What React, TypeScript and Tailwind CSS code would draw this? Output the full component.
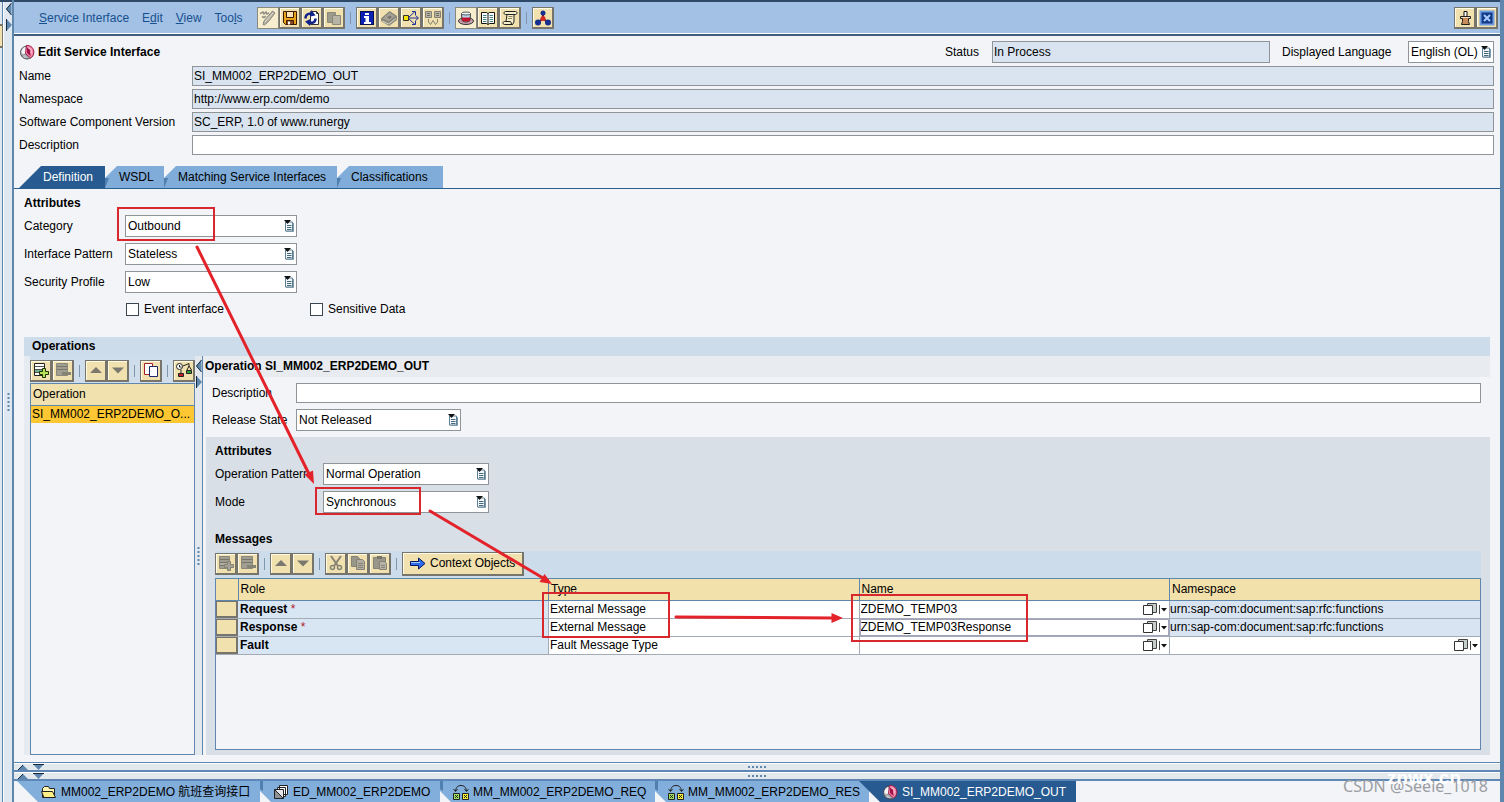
import type { ReactNode } from "react";
import clsx from "clsx";

/* ---------- icons ---------- */

interface IconProps {
  children: ReactNode;
  w?: number;
  h?: number;
}

const Icon = ({ children, w = 16, h = 16 }: IconProps) => (
  <svg
    width={w}
    height={h}
    viewBox={`0 0 ${w} ${h}`}
    fill="none"
    aria-hidden="true"
    className="shrink-0"
  >
    {children}
  </svg>
);

const ServiceIcon = () => (
  <Icon>
    <circle cx="8" cy="8.5" r="6.5" fill="#bdbdc4" stroke="#4a4a52" />
    <path d="M2.5 8a6 6 0 0 1 3.500-5l1.500 6-3 2z" fill="#f4f4f6" />
    <path d="M7.5 1.5C12 1 15 4.500 14.800 8.500c0 2.500-1.500 4.500-3.300 5.500L6.500 9.500z" fill="#f58aa8" stroke="#9c1c48" />
    <path d="M8 3.500v5.500l3.500 3V6z" fill="#a3124a" />
    <path d="M9.500 4l2.500 1.500v4" stroke="#ffd3df" />
    <path d="M3 11.500l3-1.500 4 4.500" stroke="#8b8b93" />
  </Icon>
);

const PencilIcon = () => (
  <Icon>
    <path d="M0 3.500l3-1.500 1 2 2-2 1 2 2-1M2 6.500l2 1 2-1.500" stroke="#8f8c80" strokeWidth="1.5" />
    <path d="M15 3L8.500 11.500l-4 3.500L3 14.500 4 11l8.500-10z" fill="#b5b1a4" stroke="#8a877b" />
    <path d="M5 12l8-9" stroke="#e2decf" />
  </Icon>
);

const SaveIcon = () => (
  <Icon>
    <path d="M1.500 1.500h13v13h-11l-2-2z" fill="#e8a21c" stroke="#3a1a00" />
    <path d="M4.500 1.500h7v6h-7z" fill="#fbe3b8" stroke="#3a1a00" />
    <path d="M4.500 10.500h7v4h-7z" fill="#8c4a2c" stroke="#3a1a00" />
    <path d="M6 11.500h2v3H6z" fill="#fff" />
  </Icon>
);

const RefreshDocIcon = () => (
  <Icon>
    <path d="M6.500 1.500h6l2 2v11h-8z" fill="#fff" stroke="#333" />
    <path d="M12.500 1.500v2h2" stroke="#333" />
    <path d="M1.500 8.500C1.500 4 5 3 8 4.500" stroke="#10248c" strokeWidth="2.5" />
    <path d="M7.500 0l4 5.500-5.500 1z" fill="#10248c" />
    <path d="M11.500 8.500c0 4-3.500 5-6 3.500" stroke="#10248c" strokeWidth="2.5" />
    <path d="M6.500 9L1 11.500 6 16z" fill="#10248c" />
  </Icon>
);

const CopyGrayIcon = () => (
  <Icon>
    <path d="M1.500 2.500h8v10h-8z" fill="#9d9a8e" stroke="#8a877b" />
    <path d="M6.500 5.500h8v9h-8z" fill="#b8b4a5" stroke="#8a877b" />
  </Icon>
);

const InfoIcon = () => (
  <Icon>
    <path d="M1 1h14v14H1z" fill="#0b22b4" />
    <path d="M1.500 1.500h13v13h-13z" stroke="#04104f" />
    <path d="M6 3h4v2H6zM5 6h5v6h2v2H5v-2h1.500V8H5z" fill="#fff" />
  </Icon>
);

const BookGrayIcon = () => (
  <Icon>
    <path d="M0 8.500L8.500 1 16 6v4L8 16 0 11z" fill="#8f8c80" />
    <path d="M1 8.500L8.500 2 15 6 7.500 12z" fill="#a5a295" stroke="#838074" />
    <path d="M1.500 11l6 3L15 8.500" stroke="#d6d2c2" />
    <path d="M6 7.500l2.500-2 2.500 1.500L8.500 9z" fill="#77746a" />
  </Icon>
);

const WhereUsedIcon = () => (
  <Icon>
    <path d="M.5 5.500h5v5h-5z" fill="#f6e200" stroke="#333" />
    <path d="M6 8h9M6 7l6-5.500M6 9l6 5.500" stroke="#1e2f9a" />
    <path d="M12.500 5.500l3 2.500-3 2.500M9 1.500h3.500V5M9 14.500h3.500V11" stroke="#1e2f9a" />
  </Icon>
);

const CompareGrayIcon = () => (
  <Icon>
    <path d="M.5 1.500h6v6h-6zM9.500 1.500h6v6h-6z" fill="#b8b4a5" stroke="#838074" />
    <path d="M2 3.500h3M2 5.500h3M11 3.500h3M11 5.500h3" stroke="#6f6c61" />
    <path d="M3.500 9v3l2 2.500 2.500-4 2.500 4 2-2.500V9" stroke="#838074" />
  </Icon>
);

const HatIcon = () => (
  <Icon>
    <ellipse cx="8" cy="11" rx="7.5" ry="3.5" fill="#c9a0ac" stroke="#333" />
    <path d="M3.500 3.500l.5 7c2 2 6 2 8 0l.5-7z" fill="#b9d8ee" stroke="#333" />
    <path d="M4 7.500h8v3c-2 1.500-6 1.500-8 0z" fill="#c3122e" />
    <ellipse cx="8" cy="3.500" rx="4.500" ry="1.500" fill="#eef7fc" stroke="#555" />
  </Icon>
);

const OpenBookIcon = () => (
  <Icon>
    <path d="M1.500 2.500h5l1.500 1 1.500-1h5v11h-5l-1.500 1-1.500-1h-5z" fill="#fff" stroke="#111" />
    <path d="M8 3.500v11" stroke="#111" />
    <path d="M3 5.500h3.500M3 7.500h3.500M3 9.500h3.500M3 11.500h3.500M9.500 5.500H13M9.500 7.500H13M9.500 9.500H13M9.500 11.500H13" stroke="#3f7f86" />
  </Icon>
);

const ScrollIcon = () => (
  <Icon>
    <path d="M3.500 1.500h10c2 0 2 3 0 3H12V12l-1.500 2.500h-8c-2 0-2-3 0-3H4l1-7H3.500c-2 0-2-3 0-3z" fill="#f6eec8" stroke="#222" />
    <path d="M12 4.500H5M10.500 14.500c-2 0-1-3-2-3H4" stroke="#222" />
    <path d="M6.500 6.500h4M6 8.500h4" stroke="#8c8660" />
  </Icon>
);

const MoleculeIcon = () => (
  <Icon>
    <path d="M8 3v5.500M8 8.500l-5 4M8 8.500l5 4" stroke="#7a1420" strokeWidth="2" />
    <circle cx="8" cy="3" r="2.5" fill="#16308f" />
    <circle cx="8" cy="8.5" r="2.5" fill="#d42a24" />
    <circle cx="3" cy="12.5" r="3" fill="#16308f" />
    <circle cx="13" cy="12.5" r="3" fill="#16308f" />
  </Icon>
);

const PinIcon = () => (
  <Icon>
    <path d="M7 6V1.500h3V6" fill="#fff" stroke="#111" />
    <path d="M3.500 6.500h10v2h-2v3l1 3h-8l1-3v-3h-2z" fill="#c98b5a" stroke="#222" />
    <path d="M4 7.500h9" stroke="#f5dcb4" />
  </Icon>
);

const CloseIcon = () => (
  <Icon>
    <path d="M1.500 1.500h13v13h-13z" fill="#123a86" stroke="#6f9be0" strokeWidth="2" />
    <path d="M5 5l6 6M11 5l-6 6" stroke="#a9cbff" strokeWidth="2" />
  </Icon>
);

const InsertRowIcon = ({ muted = false }: { muted?: boolean }) => (
  <Icon>
    <path d="M1.500 1.500h10v12h-10z" fill={muted ? "#a09d91" : "#fff"} stroke={muted ? "#8a877b" : "#222"} />
    <path d="M2 4.500h9M2 7.500h9M2 10.500h9" stroke={muted ? "#77746a" : "#555"} />
    <path d="M2 8h9v2H2z" fill={muted ? "#b1ada0" : "#6fae8c"} />
    <path d="M9.500 6.500h3v3h3v3h-3v3h-3v-3h-3v-3h3z" fill={muted ? "#a5a295" : "#b4e05a"} stroke={muted ? "#838074" : "#1c3300"} />
  </Icon>
);

const DeleteRowIcon = () => (
  <Icon>
    <path d="M1.500 1.500h11v12h-11z" fill="#a09d91" stroke="#8a877b" />
    <path d="M2 4.500h10M2 7.500h10" stroke="#77746a" />
    <path d="M7 10h9v3H7z" fill="#858276" />
  </Icon>
);

const UpIcon = () => (
  <Icon>
    <path d="M2 11l6-6 6 6z" fill="#7b796f" />
  </Icon>
);

const DownIcon = () => (
  <Icon>
    <path d="M2 5.500h12l-6 6z" fill="#7b796f" />
  </Icon>
);

const CopyIcon = () => (
  <Icon>
    <path d="M1.500 1.500h8v11h-8z" fill="#fff" stroke="#a3202c" />
    <path d="M6.500 4.500h8v10h-8z" fill="#fff" stroke="#1c2a6c" />
  </Icon>
);

const BalanceIcon = () => (
  <Icon>
    <circle cx="3.5" cy="4.5" r="3" fill="#fff" stroke="#222" />
    <path d="M3.500 3v2h2M7 4l6-2.500v3M13 4l-2 4M13 4l2.500 4M5 8v3" stroke="#222" />
    <path d="M2.500 11.500h5v3h-5z" fill="#c3202c" stroke="#222" />
    <path d="M10.500 8.500h5v3h-5z" fill="#2f9e3a" stroke="#222" />
  </Icon>
);

const CutIcon = () => (
  <Icon>
    <path d="M3 1l7 10M13 1L6 11" stroke="#858276" strokeWidth="2" />
    <circle cx="4.5" cy="12.5" r="2" stroke="#858276" strokeWidth="1.5" />
    <circle cx="11.5" cy="12.5" r="2" stroke="#858276" strokeWidth="1.5" />
  </Icon>
);

const PagesGrayIcon = () => (
  <Icon>
    <path d="M1.500 1.500h6l2 2v8h-8z" fill="#99968a" stroke="#858276" />
    <path d="M6.500 4.500h6l2 2v8h-8z" fill="#b1ada0" stroke="#858276" />
    <path d="M8 8.500h5M8 10.500h5M8 12.500h5" stroke="#858276" />
  </Icon>
);

const PasteGrayIcon = () => (
  <Icon>
    <path d="M1.500 2.500h12v11h-12z" fill="#99968a" stroke="#858276" />
    <path d="M5 1h5v3H5z" fill="#77746a" />
    <path d="M7.500 6.500h5l2 2v6h-7z" fill="#b8b4a5" stroke="#858276" />
    <path d="M9 10.500h4M9 12.500h4" stroke="#858276" />
  </Icon>
);

const ArrowIcon = () => (
  <Icon>
    <path d="M.5 6.500h8V3l6.500 5.500L8.500 14v-3.500h-8z" fill="#2f6df0" stroke="#08145c" />
    <path d="M1 7.500h9" stroke="#9cc6ff" />
  </Icon>
);

const FolderIcon = () => (
  <Icon>
    <path d="M1.500 13.500v-9l2-2h4l1 2h5v9z" fill="#fff7b0" stroke="#222" />
    <path d="M3 13.500L.5 7.500h11l3 6z" fill="#ffef84" stroke="#222" />
  </Icon>
);

const StackIcon = () => (
  <Icon>
    <path d="M6.500 1.500h8v9h-8zM4.500 3.500h8v9h-8z" fill="#fff" stroke="#222" />
    <path d="M1.500 5.500h9v9h-9z" fill="#e6e6ea" stroke="#222" />
    <path d="M2 6l8 8H2z" fill="#8f8f96" />
    <path d="M1.500 5.500l9 9" stroke="#222" />
  </Icon>
);

const MappingIcon = () => (
  <Icon>
    <path d="M2.500 7C3 3 5 1.500 8 1.500S13 3 13.500 7M.5 5l2 2.500 2-2.500M11.500 5l2 2.500 2-2.500" stroke="#222" />
    <path d="M.5 9.500h6v6h-6z" fill="#9fe060" stroke="#222" />
    <path d="M9.500 9.500h6v6h-6z" fill="#f6ee3c" stroke="#222" />
    <path d="M2 11l3 3M5 11l-3 3M11 11l3 3M14 11l-3 3" stroke="#222" />
  </Icon>
);

const ListIcon = () => (
  <Icon w={11} h={12}>
    <path d="M1.500 2h7v9h-7z" fill="#f4f8fa" stroke="#5c7f93" />
    <path d="M9.500 3v8.500H2" stroke="#7d9baa" />
    <path d="M3 5.500h4.500M3 7.500h4.500M3 9.500h4.500" stroke="#45687c" />
    <path d="M0 0h7L3.500 4z" fill="#111" />
  </Icon>
);

const BrowseIcon = () => (
  <Icon w={24} h={14}>
    <path d="M4.500 1.500h9v9h-9z" fill="#c5cdc8" stroke="#444" />
    <path d="M.5 3.500h9v9h-9z" fill="#fff" stroke="#333" />
    <path d="M16.500 3v9" stroke="#444" />
    <path d="M18 6h6l-3 3.500z" fill="#111" />
  </Icon>
);

const CollapseArrows = () => (
  <Icon w={6} h={30}>
    <path d="M5.500 1v12L0 7z" fill="#5f87ae" />
    <path d="M5.500 1L.5 7l5 6" stroke="#16293d" />
    <path d="M.5 17v12L6 23z" fill="#5f87ae" />
    <path d="M.5 17v12" stroke="#16293d" />
  </Icon>
);

const BarArrows = () => (
  <Icon w={26} h={6}>
    <path d="M0 6l5-5 5 5z" fill="#5f87ae" />
    <path d="M0 6l5-5" stroke="#16293d" />
    <path d="M15 0h11l-5.500 6z" fill="#5f87ae" />
    <path d="M15 .5h11" stroke="#16293d" />
  </Icon>
);

const VerticalDots = () => (
  <Icon w={3} h={18}>
    <path d="M1.500 0v18" stroke="#5f87ae" strokeWidth="2" strokeDasharray="2 2" />
  </Icon>
);

/* ---------- controls ---------- */

interface ToolButtonProps {
  label: string;
  children: ReactNode;
  pressed?: boolean;
}

const ToolButton = ({ label, children, pressed }: ToolButtonProps) => (
  <button
    type="button"
    aria-label={label}
    className={clsx(
      "flex h-[22px] w-[22px] shrink-0 items-center justify-center border",
      pressed
        ? "border-[#8b897d] bg-[#f7eed0]"
        : "border-b-2 border-r-2 border-[#77756b] bg-[#f0e1ae] shadow-[inset_1px_1px_0_#fffbe8]"
    )}
  >
    {children}
  </button>
);

const Separator = () => <span className="mx-[5px] h-3 w-px shrink-0 bg-[#7f97ae]" />;

interface SelectFieldProps {
  id: string;
  value: string;
  className: string;
}

const SelectField = ({ id, value, className }: SelectFieldProps) => (
  <span className={clsx("relative flex", className)}>
    <select
      id={id}
      defaultValue={value}
      className="h-[22px] w-full appearance-none border border-[#8f9499] bg-white pl-[2px] text-black outline-none"
    >
      <option>{value}</option>
    </select>
    <span className="pointer-events-none absolute right-[2px] top-[5px]">
      <ListIcon />
    </span>
  </span>
);

interface TextRowProps {
  id: string;
  label: string;
  value?: string;
}

const TextRow = ({ id, label, value }: TextRowProps) => (
  <div className="flex items-center">
    <label htmlFor={id} className="w-[173px] shrink-0">
      {label}
    </label>
    <input
      id={id}
      type="text"
      defaultValue={value}
      readOnly={value !== undefined}
      className={clsx(
        "h-5 min-w-0 flex-1 border border-[#8f9499] px-[1px] outline-none",
        value !== undefined ? "bg-[#d9e4f0]" : "bg-white"
      )}
    />
  </div>
);

const attributeFields = [
  { id: "category", label: "Category", value: "Outbound" },
  { id: "pattern", label: "Interface Pattern", value: "Stateless" },
  { id: "security", label: "Security Profile", value: "Low" },
];

const operationFields = [
  { id: "op-pattern", label: "Operation Pattern", value: "Normal Operation" },
  { id: "op-mode", label: "Mode", value: "Synchronous" },
];

const tabs = [
  { label: "WSDL", width: "w-[59px]" },
  { label: "Matching Service Interfaces", width: "w-[173px]" },
  { label: "Classifications", width: "w-[106px]" },
];

const messages = [
  { role: "Request", required: true, type: "External Message", name: "ZDEMO_TEMP03", ns: "urn:sap-com:document:sap:rfc:functions" },
  { role: "Response", required: true, active: true, type: "External Message", name: "ZDEMO_TEMP03Response", ns: "urn:sap-com:document:sap:rfc:functions" },
  { role: "Fault", required: false, type: "Fault Message Type", name: "", ns: "" },
];

const windowTabs = [
  { label: "ED_MM002_ERP2DEMO", icon: <StackIcon />, width: "w-[180px]" },
  { label: "MM_MM002_ERP2DEMO_REQ", icon: <MappingIcon />, width: "w-[215px]" },
  { label: "MM_MM002_ERP2DEMO_RES", icon: <MappingIcon />, width: "w-[214px]" },
];

/* ---------- sections ---------- */

const MenuBar = () => (
  <header className="flex h-[36px] shrink-0 items-center border-b-2 border-t-2 border-b-[#3f5f7c] border-t-[#2f4a68] bg-[#a3c1e4] pl-[25px] pr-[2px] shadow-[inset_0_-1px_0_#fff]">
    <nav className="flex w-[218px] shrink-0 gap-[13px] text-[#17508f]">
      <button type="button"><u>S</u>ervice Interface</button>
      <button type="button">E<u>d</u>it</button>
      <button type="button"><u>V</u>iew</button>
      <button type="button">Too<u>l</u>s</button>
    </nav>
    <ToolButton label="Display/Change" pressed><PencilIcon /></ToolButton>
    <ToolButton label="Save"><SaveIcon /></ToolButton>
    <ToolButton label="Refresh"><RefreshDocIcon /></ToolButton>
    <ToolButton label="Copy"><CopyGrayIcon /></ToolButton>
    <Separator />
    <ToolButton label="Info"><InfoIcon /></ToolButton>
    <ToolButton label="Documentation"><BookGrayIcon /></ToolButton>
    <ToolButton label="Where used"><WhereUsedIcon /></ToolButton>
    <ToolButton label="Compare"><CompareGrayIcon /></ToolButton>
    <Separator />
    <ToolButton label="Header" pressed><HatIcon /></ToolButton>
    <ToolButton label="Help"><OpenBookIcon /></ToolButton>
    <ToolButton label="History"><ScrollIcon /></ToolButton>
    <Separator />
    <ToolButton label="Relations"><MoleculeIcon /></ToolButton>
    <span className="flex-1" />
    <ToolButton label="Pin"><PinIcon /></ToolButton>
    <ToolButton label="Close"><CloseIcon /></ToolButton>
  </header>
);

const InterfaceHeader = () => (
  <section className="flex flex-col gap-[3px] pl-[5px] pr-[6px] pt-[5px]">
    <div className="flex items-center gap-3">
      <h1 className="flex flex-1 items-center gap-[3px] font-bold">
        <ServiceIcon />
        Edit Service Interface
      </h1>
      <label htmlFor="status" className="w-[35px]">Status</label>
      <input
        id="status"
        readOnly
        defaultValue="In Process"
        className="h-[22px] w-[278px] border border-[#8f9499] bg-[#d9e4f0] px-[1px] outline-none"
      />
      <label htmlFor="language" className="w-[114px]">Displayed Language</label>
      <SelectField id="language" value="English (OL)" className="w-[86px]" />
    </div>
    <TextRow id="name" label="Name" value="SI_MM002_ERP2DEMO_OUT" />
    <TextRow id="namespace" label="Namespace" value="http://www.erp.com/demo" />
    <TextRow id="version" label="Software Component Version" value="SC_ERP, 1.0 of www.runergy" />
    <TextRow id="description" label="Description" />
  </section>
);

const TabStrip = () => (
  <div role="tablist" className="mt-[11px] flex border-b border-[#2b5f92] pl-[5px]">
    <button
      type="button"
      role="tab"
      aria-selected="true"
      className="h-[22px] w-[86px] bg-[#265a90] pl-6 text-left text-white [clip-path:polygon(22px_0,100%_0,100%_100%,0_100%)]"
    >
      Definition
    </button>
    {tabs.map((tab) => (
      <button
        key={tab.label}
        type="button"
        role="tab"
        aria-selected="false"
        className={clsx(
          "relative h-[22px] whitespace-nowrap bg-[#7facd9] pl-[14px] text-left [clip-path:polygon(12px_0,100%_0,100%_100%,0_100%,0_12px)]",
          tab.width
        )}
      >
        <span className="absolute bottom-0 left-0 h-[10px] w-1 bg-[#4f7fae] [clip-path:polygon(0_0,100%_0,0_100%)]" />
        {tab.label}
      </button>
    ))}
  </div>
);

const Attributes = () => (
  <section className="pt-[6px]">
    <h2 className="font-bold">Attributes</h2>
    <div className="mt-1 flex flex-col gap-[6px]">
      {attributeFields.map((field) => (
        <div key={field.id} className="flex items-center">
          <label htmlFor={field.id} className="w-[101px] shrink-0">
            {field.label}
          </label>
          <SelectField id={field.id} value={field.value} className="w-[172px]" />
        </div>
      ))}
    </div>
    <div className="mt-2 flex pl-[102px]">
      <label className="flex w-[184px] items-center gap-[5px]">
        <input type="checkbox" className="h-[13px] w-[13px] appearance-none border border-[#3c4650] bg-white" />
        Event interface
      </label>
      <label className="flex items-center gap-[5px]">
        <input type="checkbox" className="h-[13px] w-[13px] appearance-none border border-[#3c4650] bg-white" />
        Sensitive Data
      </label>
    </div>
  </section>
);

const OperationList = () => (
  <aside className="flex w-[171px] shrink-0 flex-col bg-[#e6ebf1] pl-[6px]">
    <div className="flex h-[27px] items-center bg-[#d0deec] pt-[2px]">
      <ToolButton label="Add operation"><InsertRowIcon /></ToolButton>
      <ToolButton label="Remove operation"><DeleteRowIcon /></ToolButton>
      <Separator />
      <ToolButton label="Move up"><UpIcon /></ToolButton>
      <ToolButton label="Move down"><DownIcon /></ToolButton>
      <Separator />
      <ToolButton label="Duplicate"><CopyIcon /></ToolButton>
      <Separator />
      <ToolButton label="Check"><BalanceIcon /></ToolButton>
    </div>
    <div className="flex-1 border border-[#5f87ae] bg-[#f2f4f8]">
      <table className="w-full border-collapse text-left">
        <thead>
          <tr className="h-[21px] border-b border-[#5f87ae] bg-[#f0e1ae]">
            <th className="p-0 pl-[2px] font-normal">Operation</th>
          </tr>
        </thead>
        <tbody>
          <tr className="h-[18px] bg-[#fdc733]">
            <td className="whitespace-nowrap p-0 pl-px">SI_MM002_ERP2DEMO_O...</td>
          </tr>
        </tbody>
      </table>
    </div>
  </aside>
);

const MessagesTable = () => (
  <div className="flex-1 border border-[#5f87ae] bg-[#f2f4f8]">
    <table className="w-full table-fixed border-collapse text-left">
      <colgroup>
        <col className="w-[22px]" />
        <col />
        <col />
        <col />
        <col />
      </colgroup>
      <thead>
        <tr className="h-[21px] border-b border-[#5f87ae] bg-[#f2e1ab]">
          <th className="border-r border-[#5f87ae] p-0" />
          <th className="border-r border-[#5f87ae] p-0 pl-[2px] font-normal">Role</th>
          <th className="border-r border-[#5f87ae] p-0 pl-[2px] font-normal">Type</th>
          <th className="border-r border-[#5f87ae] p-0 pl-[2px] font-normal">Name</th>
          <th className="p-0 pl-[2px] font-normal">Namespace</th>
        </tr>
      </thead>
      <tbody>
        {messages.map((row) => (
          <tr key={row.role} className="h-[18px] border-b border-[#a3abb5]">
            <td className="p-0">
              <button
                type="button"
                aria-label={`Select ${row.role}`}
                className="block h-[17px] w-full border border-b-2 border-r-2 border-[#77756b] bg-[#f0e1ae]"
              />
            </td>
            <td className="border-r border-[#a3abb5] bg-[#d8e5f2] p-0 pl-[2px] font-bold">
              {row.role}
              {row.required && <span className="font-normal text-[#b01c2c]"> *</span>}
            </td>
            <td className="border-r border-[#a3abb5] bg-white p-0 pl-[1px]">{row.type}</td>
            <td className="border-r border-[#a3abb5] bg-white p-0">
              <div
                className={clsx(
                  "flex items-center pr-[2px]",
                  row.active && "shadow-[inset_0_0_0_1px_#a3a1bd]"
                )}
              >
                <input
                  type="text"
                  aria-label={`${row.role} name`}
                  defaultValue={row.name}
                  className="h-[17px] min-w-0 flex-1 pl-px outline-none"
                />
                <button type="button" aria-label="Browse names"><BrowseIcon /></button>
              </div>
            </td>
            <td className={clsx("p-0", row.ns ? "bg-[#d9e4f2]" : "bg-white")}>
              {row.ns || (
                <div className="flex items-center pr-[2px]">
                  <input
                    type="text"
                    aria-label={`${row.role} namespace`}
                    className="h-[17px] min-w-0 flex-1 outline-none"
                  />
                  <button type="button" aria-label="Browse namespaces"><BrowseIcon /></button>
                </div>
              )}
            </td>
          </tr>
        ))}
      </tbody>
    </table>
  </div>
);

const OperationDetail = () => (
  <section className="flex min-w-0 flex-1 flex-col">
    <h2 className="h-[21px] bg-[#e8ecf1] pl-[2px] pt-[2px] font-bold">
      Operation SI_MM002_ERP2DEMO_OUT
    </h2>
    <div className="mt-[6px] flex flex-col gap-[6px] pl-[9px] pr-[9px]">
      <div className="flex items-center">
        <label htmlFor="op-description" className="w-[84px] shrink-0">
          Description
        </label>
        <input
          id="op-description"
          type="text"
          className="h-5 min-w-0 flex-1 border border-[#8f9499] bg-white outline-none"
        />
      </div>
      <div className="flex items-center">
        <label htmlFor="release" className="w-[84px] shrink-0">
          Release State
        </label>
        <SelectField id="release" value="Not Released" className="w-[165px]" />
      </div>
    </div>
    <div className="ml-[3px] mt-[6px] flex flex-1 flex-col bg-[#d8dfe7] pb-[5px] pl-[9px] pr-[9px] pt-[6px]">
      <h3 className="font-bold">Attributes</h3>
      <div className="mt-1 flex flex-col gap-[6px]">
        {operationFields.map((field) => (
          <div key={field.id} className="flex items-center">
            <label htmlFor={field.id} className="w-[108px] shrink-0">
              {field.label}
            </label>
            <SelectField id={field.id} value={field.value} className="w-[166px]" />
          </div>
        ))}
      </div>
      <h3 className="mt-[18px] font-bold">Messages</h3>
      <div className="mt-1 flex h-[27px] items-center bg-[#cddcea] pb-[2px]">
        <ToolButton label="Add message"><InsertRowIcon muted /></ToolButton>
        <ToolButton label="Remove message"><DeleteRowIcon /></ToolButton>
        <Separator />
        <ToolButton label="Move up"><UpIcon /></ToolButton>
        <ToolButton label="Move down"><DownIcon /></ToolButton>
        <Separator />
        <ToolButton label="Cut"><CutIcon /></ToolButton>
        <ToolButton label="Copy"><PagesGrayIcon /></ToolButton>
        <ToolButton label="Paste"><PasteGrayIcon /></ToolButton>
        <Separator />
        <button
          type="button"
          className="flex h-6 w-[122px] items-center gap-1 whitespace-nowrap border border-b-2 border-r-2 border-[#77756b] bg-[#f0e1ae] pl-[7px] shadow-[inset_1px_1px_0_#fffbe8]"
        >
          <ArrowIcon />
          Context Objects
        </button>
      </div>
      <MessagesTable />
    </div>
  </section>
);

const SplitBar = () => (
  <div className="relative flex h-[9px] items-center justify-center border-b-2 border-[#5f87b5] bg-[#e3e8ed] shadow-[inset_0_1px_0_#fff]">
    <span className="absolute left-1 top-px">
      <BarArrows />
    </span>
    <Icon w={18} h={2}>
      <path d="M0 1h18" stroke="#5f87ae" strokeWidth="2" strokeDasharray="2 2" />
    </Icon>
  </div>
);

const WindowTabs = () => (
  <div className="flex h-[21px] overflow-hidden bg-[#f2f4f8] pl-[3px]">
    <button
      type="button"
      className="flex h-full w-[243px] items-center gap-1 whitespace-nowrap bg-[#82aedb] pl-[24px] [clip-path:polygon(0_0,100%_0,100%_100%,21px_100%)]"
    >
      <FolderIcon />
      MM002_ERP2DEMO 航班查询接口
    </button>
    {windowTabs.map((tab) => (
      <button
        key={tab.label}
        type="button"
        className={clsx(
          "relative flex h-full items-center gap-1 whitespace-nowrap bg-[#82aedb] pl-[13px] [clip-path:polygon(0_0,100%_0,100%_100%,11px_100%,0_10px)]",
          tab.width
        )}
      >
        <span className="absolute left-0 top-0 h-[10px] w-[3px] bg-[#4f7fae] [clip-path:polygon(0_0,100%_0,100%_100%,0_80%)]" />
        {tab.icon}
        {tab.label}
      </button>
    ))}
    <button
      type="button"
      className="relative -ml-[10px] flex h-full w-[217px] items-center gap-1 whitespace-nowrap bg-[#265a90] pl-[23px] text-white [clip-path:polygon(0_0,100%_0,100%_100%,21px_100%)]"
    >
      <ServiceIcon />
      SI_MM002_ERP2DEMO_OUT
    </button>
  </div>
);

// Red marks that walk through the settings in order
const Annotations = () => (
  <svg
    width="1504"
    height="802"
    viewBox="0 0 1504 802"
    fill="none"
    aria-hidden="true"
    className="pointer-events-none absolute left-0 top-0"
  >
    <g stroke="#d9272e" strokeWidth="2">
      <path d="M118 208h96v32h-96z" />
      <path d="M316 488h104v26H316z" />
      <path d="M543 593h126v44H543z" />
      <path d="M852 595h175v46H852z" />
    </g>
    <g stroke="#e3222a" strokeWidth="3" strokeLinecap="round">
      <path d="M197 247L309 474" />
      <path d="M430 511L543 578" />
      <path d="M676 617L833 618" />
    </g>
    <g fill="#e3222a">
      <path d="M314 484l-9.500-9.500 8.500-4z" />
      <path d="M552 584l-12.500-2 5-8z" />
      <path d="M843 618l-11.500 5v-10z" />
    </g>
  </svg>
);

export default function App() {
  return (
    <div className="relative flex h-screen overflow-hidden bg-[#e3e8ee] font-['Liberation_Sans','Noto_Sans_CJK_SC',sans-serif] text-[12px] leading-4 text-black">
      <div className="relative flex w-3 shrink-0 flex-col items-center justify-center border-t-2 border-[#2f4a68] bg-[#dfe7f0] pl-[4px]">
        <span className="absolute inset-y-0 left-[2px] w-[2px] border-l border-[#5f87ae] bg-white" />
        <span className="absolute left-0 top-[22px] h-6 w-[3px] border-y-2 border-r border-[#77756b] bg-[#f0e1ae]" />
        <span className="absolute left-[6px] top-0">
          <CollapseArrows />
        </span>
        <VerticalDots />
      </div>

      <div className="flex min-w-0 flex-1 flex-col border-l-2 border-r-4 border-[#5f87ae]">
        <MenuBar />
        <main className="flex min-h-0 flex-1 flex-col bg-[#f2f4f8] pb-[7px]">
          <InterfaceHeader />
          <TabStrip />
          <div className="flex min-h-0 flex-1 flex-col pl-[10px] pr-[10px]">
            <Attributes />
            <h2 className="mt-5 h-[19px] bg-[#cddcea] pl-2 pt-px font-bold">Operations</h2>
            <div className="flex min-h-0 flex-1">
              <OperationList />
              <div className="relative flex w-2 shrink-0 flex-col items-center justify-center border-r border-[#5f87ae] bg-[#e3e8ee]">
                <span className="absolute right-0 top-[3px]">
                  <CollapseArrows />
                </span>
                <VerticalDots />
              </div>
              <OperationDetail />
            </div>
          </div>
        </main>
        <footer className="shrink-0 border-t border-[#5f87ae]">
          <SplitBar />
          <SplitBar />
          <WindowTabs />
        </footer>
      </div>

      <Annotations />
      <span className="pointer-events-none absolute bottom-1 right-4 font-['Noto_Sans',sans-serif] text-[16px] leading-6 text-[#9b9da1]">
        CSDN @Seele_1018
      </span>
      <span className="pointer-events-none absolute bottom-3 right-[43px] text-[19px] font-bold leading-6 text-white">
        znwx.cn
      </span>
    </div>
  );
}
